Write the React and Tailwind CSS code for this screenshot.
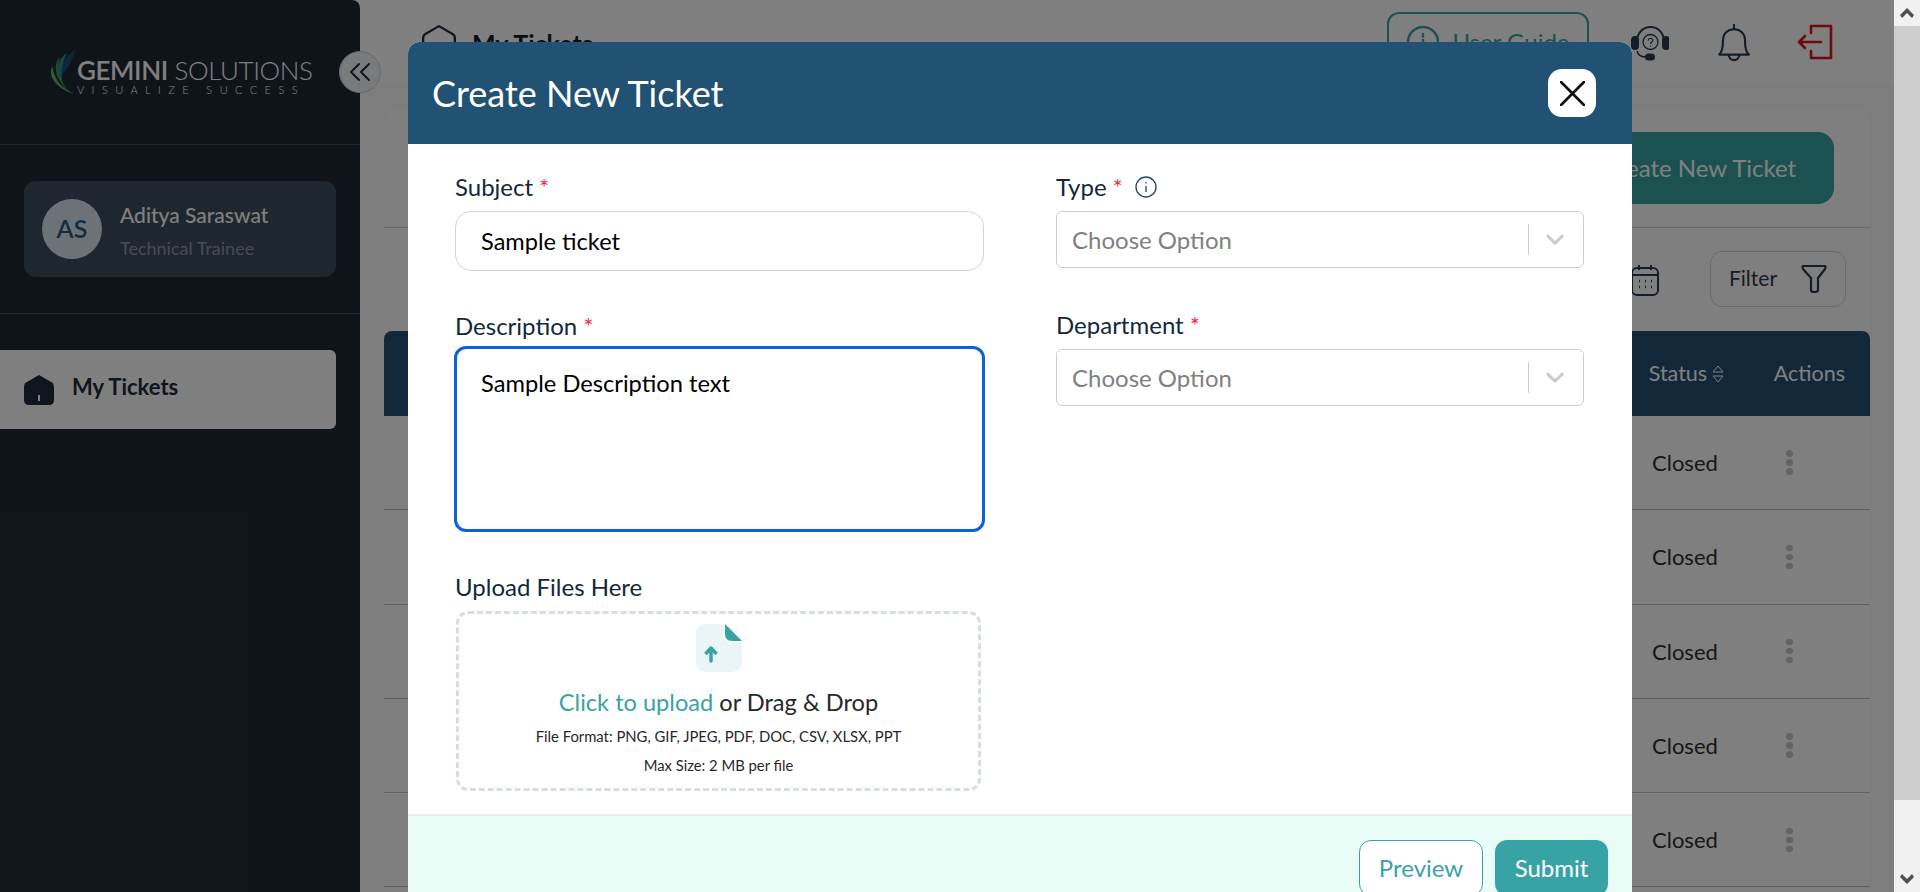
import React from "react";

const rows = [0, 1, 2, 3, 4];

const Star = () => <span className="text-[#e8304f] ml-1.5">*</span>;

const HouseIcon = ({ solid, className }) => (
  <svg viewBox="0 0 30 30" className={className}>
    <path
      d="M15 1 L27 8 Q29 9 29 12 V25 Q29 29 25 29 H5 Q1 29 1 25 V12 Q1 9 3 8 Z"
      fill={solid ? "#1e2a38" : "none"}
      stroke="#1e2a38"
      strokeWidth="2"
      strokeLinejoin="round"
    />
    {solid && <rect x="14" y="20" width="2" height="6" fill="#fff" />}
  </svg>
);

const GeminiLeaf = () => (
  <svg viewBox="0 0 32 50" className="w-[29px] h-[48px] shrink-0">
    <path d="M31 1 C20 8 12 20 15 31 C17 26 26 20 31 1 Z" fill="#1f4f73" />
    <path d="M22 4 C12 10 9 24 18 40 C14 26 17 14 22 4 Z" fill="#2f8f8c" />
    <path d="M14 9 C7 16 7 32 26 48 C13 36 11 22 14 9 Z" fill="#3f9b66" />
    <path d="M6 19 C1 26 6 42 30 49 C14 42 8 32 6 19 Z" fill="#5cb85c" />
  </svg>
);

const Sidebar = () => (
  <aside className="w-[360px] shrink-0 bg-[#1e2936] rounded-tr-lg h-full relative">
    <div className="h-[145px] border-b border-[#3a4f63] flex items-start pt-[48px] pl-[47px] gap-[1px]">
      <GeminiLeaf />
      <div className="font-['Lato',sans-serif] text-white pt-[10px]">
        <div className="text-[26px] leading-[24px] whitespace-nowrap tracking-[-0.4px]">
          <span className="font-semibold">GEMINI</span>
          <span className="font-light"> SOLUTIONS</span>
        </div>
        <div className="text-[11px] leading-[14px] mt-[1px] tracking-[7.4px] font-light whitespace-nowrap">VISUALIZE SUCCESS</div>
      </div>
    </div>
    <button className="absolute left-[339px] top-[51px] w-[42px] h-[42px] rounded-full bg-[#f3f4f6] border border-[#cbd5e1] flex items-center justify-center">
      <svg viewBox="0 0 24 24" className="w-[24px] h-[24px]" fill="none" stroke="#1e2a38" strokeWidth="1.8" strokeLinecap="round" strokeLinejoin="round">
        <path d="M11 4 L3 12 L11 20" />
        <path d="M21 4 L13 12 L21 20" />
      </svg>
    </button>
    <div className="h-[169px] border-b border-[#3a4f63] px-6 pt-9">
      <div className="h-[96px] bg-[#3d4d60] rounded-xl flex items-center px-[18px] gap-[18px]">
        <div className="w-[60px] h-[60px] rounded-full bg-[#d8e6f0] flex items-center justify-center text-[25px] font-semibold text-[#265a87] font-['Lato',sans-serif]">AS</div>
        <div className="font-['Lato',sans-serif] pt-[4px]">
          <div className="text-[21px] leading-[30px] font-medium text-white">Aditya Saraswat</div>
          <div className="text-[18px] leading-[30px] mt-[3px] text-[#8b99a8]">Technical Trainee</div>
        </div>
      </div>
    </div>
    <div className="pt-[36px] pr-6">
      <div className="h-[79px] bg-white rounded-r-md flex items-center pl-6 gap-[18px]">
        <HouseIcon solid className="w-[30px] h-[30px]" />
        <span className="text-[22px] font-bold text-[#1e2a38] mb-[6px] font-['Lato',sans-serif]">My Tickets</span>
      </div>
    </div>
  </aside>
);

const TableRow = () => (
  <div className="h-[94.3px] border-b border-[#c2c2c2] bg-white flex items-center justify-end pr-[39px]">
    <span className="text-[22px] text-[#2e2e2e] w-[134px]">Closed</span>
    <span className="w-[45px] flex flex-col gap-[2.5px] items-start">
      <i className="w-[6.5px] h-[6.5px] rounded-full bg-[#c4c6cc]" />
      <i className="w-[6.5px] h-[6.5px] rounded-full bg-[#c4c6cc]" />
      <i className="w-[6.5px] h-[6.5px] rounded-full bg-[#c4c6cc]" />
    </span>
  </div>
);

const MainPage = () => (
  <main className="flex-1 min-w-0 bg-[#fafafa] h-full font-['Lato',sans-serif]">
    <div className="h-[84px] bg-white flex items-start pl-[62px] pr-[61px]">
      <HouseIcon className="w-[34px] h-[34px] mt-[25px]" />
      <span className="text-[25px] font-bold text-[#111827] ml-[16px] mt-[25px]">My Tickets</span>
      <button className="ml-auto mt-[12px] w-[202px] h-[60px] border-2 border-[#38a3a5] rounded-xl flex items-center justify-center gap-3 text-[24px] text-[#38a3a5]">
        <svg viewBox="0 0 34 34" className="w-[34px] h-[34px]" fill="none" stroke="#38a3a5" strokeWidth="2.4">
          <circle cx="17" cy="17" r="15" />
          <path d="M17 15 V25 M17 9 V11.5" strokeLinecap="round" />
        </svg>
        User Guide
      </button>
      <svg viewBox="0 0 38 38" className="w-[38px] h-[38px] ml-[42px] mt-[24px]" fill="none" stroke="#2a3c50" strokeWidth="2">
        <path d="M6 18 C6 -2 33 -2 33 18" />
        <rect x="1" y="13" width="6" height="12" rx="3" fill="#2a3c50" />
        <rect x="32" y="13" width="6" height="12" rx="3" fill="#2a3c50" />
        <circle cx="19.5" cy="18" r="7.5" strokeWidth="1.3" />
        <path d="M17.3 16.5 C17.3 13.5 22 13.7 21.8 16.5 C21.7 18 19.6 18 19.6 20 M19.6 21.6 V22.4" strokeWidth="1.2" />
        <path d="M6 27 C7 32 11 33 15 33" strokeWidth="1.4" />
        <rect x="15" y="30.5" width="8" height="5" rx="2.5" fill="#2a3c50" />
      </svg>
      <svg viewBox="0 0 30 38" className="w-[32px] h-[40px] ml-[49px] mt-[23px]" fill="none" stroke="#2a3c50" strokeWidth="2" strokeLinejoin="round">
        <path d="M15 1 V6" />
        <path d="M1 30 C4 27 4.5 23 4.5 17 C4.5 10 9 6 15 6 C21 6 25.5 10 25.5 17 C25.5 23 26 27 29 30 Z" />
        <path d="M10 30 C10 37 20 37 20 30" />
      </svg>
      <svg viewBox="0 0 36 36" className="w-[36px] h-[36px] ml-[47px] mt-[24px]" fill="none" stroke="#d8141f" strokeWidth="2.6" strokeLinejoin="round" strokeLinecap="round">
        <path d="M14 9 V2 H34 V34 H14 V27" />
        <path d="M24 18 H2 M8 12 L2 18 L8 24" />
      </svg>
    </div>
    <div className="ml-[24px] mr-[24px] mt-[24px] bg-white rounded-t-2xl">
      <div className="h-[120px] border-b border-[#d1d5db] flex justify-end items-start pt-[24px] pr-[36px]">
        <button className="w-[300px] h-[72px] bg-[#38a3a5] rounded-2xl text-white text-[24px] pl-[30px]">Create New Ticket</button>
      </div>
      <div className="h-[103px] flex items-start justify-end pr-[24px] pt-[23px]">
        <svg viewBox="0 0 28 32" className="w-[28px] h-[32px] mt-[13px] mr-[51px]" fill="none" stroke="#2a3c50" strokeWidth="2">
          <rect x="1" y="4" width="26" height="27" rx="5" />
          <path d="M1 11 H27 M8 1 V6 M20 1 V6" />
          <path d="M8 17 H9 M14 17 H15 M20 17 H21 M8 23 H9 M14 23 H15 M20 23 H21" strokeWidth="2.4" />
        </svg>
        <div className="w-[136px] h-[56px] border border-[#cbd5e1] rounded-xl flex items-center pl-[18px] justify-between pr-[18px] text-[21px] text-[#2a3c50]">
          <span className="mb-[2px]">Filter</span>
          <svg viewBox="0 0 26 30" className="w-[26px] h-[30px]" fill="none" stroke="#2a3c50" strokeWidth="2.2" strokeLinejoin="round">
            <path d="M2 2 H24 Q25 2 24 5 L17 14 V26 Q17 28 13 28 Q10 28 10 26 V14 L2 5 Q1 2 2 2 Z" />
          </svg>
        </div>
      </div>
      <div className="h-[85px] bg-[#244f73] rounded-t-lg flex items-center justify-end pr-[25px] text-[21.5px] text-white">
        <span className="w-[125px] flex items-center gap-[4px]">
          Status
          <svg viewBox="0 0 14 20" className="w-[14px] h-[20px]" fill="none" stroke="#fff" strokeWidth="1">
            <path d="M2 8 L7 2 L12 8 Z M2 12 L7 18 L12 12 Z" />
          </svg>
        </span>
        <span>Actions</span>
      </div>
      {rows.map((r) => (
        <TableRow key={r} />
      ))}
    </div>
  </main>
);

const Label = ({ children }) => (
  <div className="text-[24px] leading-[28px] text-[#12283b] font-['Lato',sans-serif]">{children}</div>
);

const SelectBox = () => (
  <div className="mt-[10px] h-[57px] border border-[#cccccc] rounded-md flex items-center pl-[15px] pr-[13px]">
    <span className="text-[24px] text-[#808080] flex-1">Choose Option</span>
    <span className="w-[1.5px] h-[31px] bg-[#cccccc]" />
    <svg viewBox="0 0 20 20" className="w-[30px] h-[30px] ml-[11px]" fill="#cccccc">
      <path d="M4.5 6.7 C4.9 6.3 5.5 6.3 5.9 6.7 L10 10.6 L14.1 6.7 C14.5 6.3 15.1 6.3 15.5 6.7 C15.9 7.1 15.9 7.7 15.5 8.1 L10.7 12.8 C10.3 13.2 9.7 13.2 9.3 12.8 L4.5 8.1 C4.1 7.7 4.1 7.1 4.5 6.7 Z" />
    </svg>
  </div>
);

const UploadIcon = () => (
  <svg viewBox="0 0 46 48" className="w-[46px] h-[48px]">
    <path d="M10 0 H27 V10 Q27 19 36 19 H46 V36 Q46 48 34 48 H12 Q0 48 0 36 V10 Q0 0 10 0 Z" fill="#e9f5f6" />
    <path d="M29 0 L46 17 H36 Q29 17 29 10 Z" fill="#38a3a5" />
    <path d="M15 37 V25" stroke="#38a3a5" strokeWidth="3.5" strokeLinecap="round" fill="none" />
    <path d="M9.5 30 L15 24 L20.5 30" stroke="#38a3a5" strokeWidth="3.5" fill="none" strokeLinejoin="round" />
  </svg>
);

const TicketModal = () => (
  <div className="absolute left-[408px] top-[42px] w-[1224px] rounded-t-xl overflow-hidden bg-white font-['Lato',sans-serif]">
    <div className="h-[102px] bg-[#215273] flex items-center justify-between px-6 pr-[36px]">
      <h1 className="text-[36px] text-white font-normal">Create New Ticket</h1>
      <button className="w-[48px] h-[48px] bg-white rounded-[14px] flex items-center justify-center">
        <svg viewBox="0 0 24 24" className="w-[25px] h-[25px]" fill="none" stroke="#111" strokeWidth="2.6" strokeLinecap="round">
          <path d="M1 1 L23 23 M23 1 L1 23" />
        </svg>
      </button>
    </div>
    <div className="h-[672px] flex pl-[47px] pr-[48px] pt-[29px] gap-[72px] border-b-2 border-[#e8ecea]">
      <div className="w-[529px]">
        <Label>
          Subject<Star />
        </Label>
        <div className="mt-[10px] h-[60px] border border-[#cbd5e1] rounded-2xl flex items-center pl-[25px] pt-[2px] text-[23.6px] text-black">Sample ticket</div>
        <div className="mt-[41px]">
          <Label>
            Description<Star />
          </Label>
        </div>
        <div className="mt-[6px] -mx-[1px] h-[186px] border-[3px] border-[#0a62d8] rounded-xl pl-[24px] pt-[17px] text-[23.7px] text-black">Sample Description text</div>
        <div className="mt-[41px]">
          <Label>Upload Files Here</Label>
        </div>
        <div className="mt-[10px] h-[180px] w-[525px] ml-[1px] border-[3px] border-dashed border-[#d5dcea] rounded-xl flex flex-col items-center pt-[10px]">
          <UploadIcon />
          <div className="mt-[12px] text-[23.6px] leading-[36px] text-[#26282b]">
            <span className="text-[#38a3a5]">Click to upload</span> or Drag &amp; Drop
          </div>
          <div className="text-[14.8px] leading-[29px] mt-[2px] text-[#26282b]">File Format: PNG, GIF, JPEG, PDF, DOC, CSV, XLSX, PPT</div>
          <div className="text-[14.8px] leading-[29px] text-[#26282b]">Max Size: 2 MB per file</div>
        </div>
      </div>
      <div className="w-[528px]">
        <Label>
          <span className="flex items-center">
            Type<Star />
            <svg viewBox="0 0 22 22" className="w-[22px] h-[22px] ml-[12px]" fill="none" stroke="#2a4a66" strokeWidth="1.4">
              <circle cx="11" cy="11" r="10" />
              <path d="M11 10 V16 M11 6 V7.5" />
            </svg>
          </span>
        </Label>
        <SelectBox />
        <div className="mt-[43px]">
          <Label>
            Department<Star />
          </Label>
        </div>
        <SelectBox />
      </div>
    </div>
    <div className="bg-[#eafcf6] h-[104px] flex justify-end items-start gap-3 pt-[24px] pr-6">
      <button className="w-[124px] h-[56px] bg-white border border-[#38a3a5] rounded-xl text-[24px] text-[#38a3a5]">Preview</button>
      <button className="w-[113px] h-[56px] bg-[#38a3a5] rounded-xl text-[24px] text-white">Submit</button>
    </div>
  </div>
);

const Scrollbar = () => (
  <div className="w-[26px] shrink-0 h-full flex flex-col bg-[#f1f1f1] relative z-10">
    <div className="h-[26px] flex items-center justify-center">
      <svg viewBox="0 0 14 10" className="w-[14px] h-[10px]">
        <path d="M7 0 L14 7 L12 10 L7 5 L2 10 L0 7 Z" fill="#505050" />
      </svg>
    </div>
    <div className="h-[774px] bg-[#cdcdcd]" />
    <div className="flex-1 flex items-end justify-center pb-[8px]">
      <svg viewBox="0 0 14 10" className="w-[14px] h-[10px]">
        <path d="M7 10 L14 3 L12 0 L7 5 L2 0 L0 3 Z" fill="#505050" />
      </svg>
    </div>
  </div>
);

const App = () => {
  return (
    <div className="relative w-full h-[892px] overflow-hidden flex">
      <div className="relative flex-1 min-w-0 h-full flex overflow-hidden">
        <Sidebar />
        <MainPage />
        <div className="absolute inset-0 bg-black/50" />
        <TicketModal />
      </div>
      <Scrollbar />
    </div>
  );
};

export default App;
